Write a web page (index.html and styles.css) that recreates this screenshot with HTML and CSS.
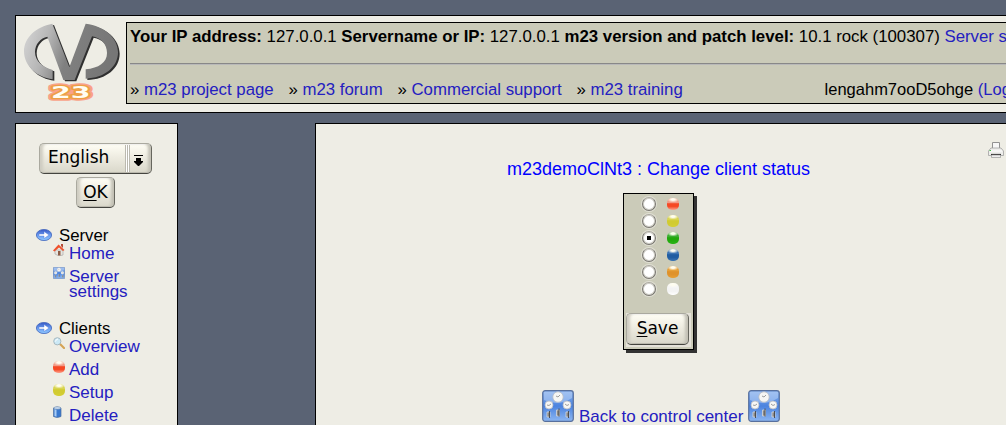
FILE: index.html
```html
<!DOCTYPE html>
<html lang="en">
<head>
<meta charset="utf-8">
<title>m23 - Change client status</title>
<link rel="stylesheet" href="styles.css">
</head>
<body>
<svg class="defs" width="0" height="0">
  <defs>
    <linearGradient id="steel" x1="0" y1="0" x2="1" y2=".2"><stop offset="0" stop-color="#d8d8d8"/><stop offset=".3" stop-color="#b5b5b5"/><stop offset=".55" stop-color="#808080"/><stop offset="1" stop-color="#767676"/></linearGradient>
    <linearGradient id="blue" x1="0" y1="0" x2="0" y2="1"><stop offset="0" stop-color="#8db4ec"/><stop offset=".5" stop-color="#4b83df"/><stop offset="1" stop-color="#8cb6f2"/></linearGradient>
    <linearGradient id="arrowbg" x1="0" y1="0" x2="0" y2="1"><stop offset="0" stop-color="#3556c4"/><stop offset=".5" stop-color="#6a9cf0"/><stop offset="1" stop-color="#8fc8ff"/></linearGradient>
    <symbol id="arrow" viewBox="0 0 16 12"><ellipse cx="8" cy="6" rx="7.6" ry="5.6" fill="url(#arrowbg)" stroke="#4065bd" stroke-width=".8"/><path d="M3 5h5V2.500L13 6 8 9.500V7H3z" fill="#fff" stroke="#4b72cf" stroke-width=".4"/></symbol>
    <symbol id="panel" viewBox="0 0 32 32"><rect x=".7" y=".7" width="30.600" height="30.600" rx="2.500" fill="url(#blue)" stroke="#58709d" stroke-width="1.200"/><path d="M2 10Q16 17 30 8V2H2z" fill="#b7d0f5" opacity=".55"/><g fill="#f6f6f4" stroke="#b9bdc4" stroke-width=".8"><circle cx="16" cy="7" r="5.2"/><circle cx="7" cy="15" r="4"/><circle cx="25" cy="15" r="4"/></g><path d="M14 6l2 1 2-2M5 15l2 .5 2-1.500M23 14l2 1.500 2-1" stroke="#888" stroke-width=".8" fill="none"/><g fill="#888" stroke="#d5d8dc" stroke-width=".8"><path d="M5 22h3v5H5zM14.500 20h3v6h-3zM24 22h3v5h-3z"/></g><path d="M7.500 21v7M17 18.500v8M26.500 21v7" stroke="#444" stroke-width=".9"/></symbol>
  </defs>
</svg>
<header class="top">
  <svg class="logo" viewBox="0 0 330 288" width="110" height="96">
    <path transform="translate(5 4)" fill="#303030" d="M109 23C60 32 24 65 24 106C24 150 62 184 110 190V162C80 154 57 136 57 108C57 84 74 66 94 62L142 192H176L228 61C254 65 273 84 273 111C273 140 248 156 209 160V188C266 186 306 153 306 109C306 66 266 30 209 23L160 154z"/>
    <path fill="url(#steel)" d="M109 23C60 32 24 65 24 106C24 150 62 184 110 190V162C80 154 57 136 57 108C57 84 74 66 94 62L142 192H176L228 61C254 65 273 84 273 111C273 140 248 156 209 160V188C266 186 306 153 306 109C306 66 266 30 209 23L160 154z"/>
    <g class="logo-number">
      <text class="halo" x="105" y="247" textLength="118" lengthAdjust="spacingAndGlyphs">23</text>
      <text class="edge" x="105" y="247" textLength="118" lengthAdjust="spacingAndGlyphs">23</text>
      <text x="105" y="247" textLength="118" lengthAdjust="spacingAndGlyphs">23</text>
    </g>
  </svg>
  <div class="info">
    <div class="facts"><b>Your IP address:</b> 127.0.0.1 <b>Servername or IP:</b> 127.0.0.1 <b>m23 version and patch level:</b> 10.1 rock (100307) <a>Server status</a></div>
    <hr>
    <div class="links">
      <span>» <a>m23 project page</a></span><span>» <a>m23 forum</a></span><span>» <a>Commercial support</a></span><span>» <a>m23 training</a></span>
      <span class="user">lengahm7ooD5ohge <a>(Logout)</a></span>
    </div>
  </div>
</header>
<div class="columns">
  <nav class="side">
    <div class="btn select"><span class="lang">English</span><i class="grip"></i><svg width="9" height="12" viewBox="0 0 9 12"><path d="M0 0h9v1H0zM2 3h5v3h2v1L5 11H4L0 7V6h2z"/></svg></div>
    <div class="btn ok"><u>O</u>K</div>
    <section class="menu first">
      <h2><svg width="16" height="12"><use href="#arrow"/></svg>Server</h2>
      <p><svg width="12" height="12" viewBox="0 0 12 12"><path d="M2 6h8v5L6 12 2 10z" fill="#e8e6e0" stroke="#aaa" stroke-width=".7"/><path d="M5 7h2.500v4.500H5z" fill="#8c5c45"/><path d="M0 6.500L5.500.5 11.500 6 10 7 6 3.500 1.500 7.500z" fill="#ef522d"/><path d="M8 0h2v4L8 2z" fill="#b44c37"/></svg><a>Home</a></p>
      <p><svg width="12" height="12"><use href="#panel"/></svg><a>Server settings</a></p>
    </section>
    <section class="menu">
      <h2><svg width="16" height="12"><use href="#arrow"/></svg>Clients</h2>
      <p><svg width="12" height="12" viewBox="0 0 12 12"><path d="M7 7l4 4" stroke="#d5a456" stroke-width="2.200" stroke-linecap="round"/><circle cx="4.300" cy="4.300" r="3.600" fill="#cbe9f6" stroke="#a8b9c0"/><path d="M2.500 4.500Q3 2 5 2" stroke="#fff" fill="none"/></svg><a>Overview</a></p>
      <p><i class="ball red"></i><a>Add</a></p>
      <p><i class="ball yellow"></i><a>Setup</a></p>
      <p><svg width="12" height="12" viewBox="0 0 12 12"><path d="M.5 2Q4 0 8 2v8.500Q4 12.500.5 10.500z" fill="#3979cf" stroke="#4c6f9f" stroke-width=".7"/><path d="M1.500 3l2 .7v7l-2-.7z" fill="#a9cdf5"/><ellipse cx="4.300" cy="2" rx="3.500" ry="1.300" fill="#c8dbf0" stroke="#6481a5" stroke-width=".5"/></svg><a>Delete</a></p>
    </section>
  </nav>
  <main class="page">
    <svg class="printer" width="16" height="17" viewBox="0 0 16 17"><path d="M4.500.5h7v7h-7z" fill="#f7f7f7" stroke="#929292"/><path d="M3 6h10l2.500 3v4.500H.5V9z" fill="#eeeeec" stroke="#a1a1a1" stroke-width=".8"/><path d="M2 9h12" stroke="#fff"/><path d="M3 12.500h10" stroke="#222" stroke-width="1.200"/><path d="M3.500 13h9v2.500h-9z" fill="#eee" stroke="#999" stroke-width=".7"/><path d="M1.500 8.500h1.500" stroke="#48c048"/></svg>
    <h1>m23demoClNt3 : Change client status</h1>
    <div class="status">
      <div class="row"><i class="radio"></i><i class="ball red"></i></div>
      <div class="row"><i class="radio"></i><i class="ball yellow"></i></div>
      <div class="row"><i class="radio on"></i><i class="ball green"></i></div>
      <div class="row"><i class="radio"></i><i class="ball navy"></i></div>
      <div class="row"><i class="radio"></i><i class="ball orange"></i></div>
      <div class="row"><i class="radio"></i><i class="ball white"></i></div>
      <div class="savewrap"><div class="btn save"><span><u>S</u>ave</span></div></div>
    </div>
    <div class="back"><svg width="32" height="32"><use href="#panel"/></svg><a>Back to control center</a><svg width="32" height="32"><use href="#panel"/></svg></div>
  </main>
</div>
</body>
</html>
```
FILE: styles.css
```css
* { box-sizing: border-box; }
html, body { height: 100%; }
body {
  margin: 0;
  padding: 15px 0 0 15px;
  overflow: hidden;
  background: #5a6374;
  color: #000;
  font: 16.8px/19px "Liberation Sans", Arial, sans-serif;
}
svg { display: block; flex: none; }
.defs { position: absolute; }
a { color: #2420c0; }
.top {
  display: flex;
  width: 1060px;
  height: 98px;
  border: 1px solid #000;
  background: #eeede5;
}
.info {
  width: 940px;
  height: 82px;
  margin-top: 6px;
  padding: 4px 3px 0;
  border: 1px solid #000;
  background: #cbcbb9;
  white-space: nowrap;
}
.facts { font-size: 16.81px; }
.info hr { height: 2px; margin: 17px 0 15px; border: 0; border-top: 1px solid #888; border-bottom: 1px solid #b9b9b9; }
.links { display: flex; gap: 14.8px; }
.user { margin-left: 127px; font-size: 16.5px; }
.logo-number text {
  font: bold 45px "DejaVu Sans", sans-serif;
  fill: #fffdf2;
}
.logo-number .halo { stroke: #ff7a58; stroke-width: 16; stroke-linejoin: round; opacity: .65; }
.logo-number .edge { stroke: #eda044; stroke-width: 8; stroke-linejoin: round; }
.columns { display: flex; gap: 137px; margin-top: 10px; }
.side {
  width: 163px;
  height: 302px;
  flex: none;
  padding: 19px 0 0 20px;
  border: 1px solid #000;
  border-bottom: 0;
  background: #eeede5;
}
.btn {
  display: flex;
  align-items: center;
  border: 1px solid #aaa99f;
  border-right-color: #66665e;
  border-bottom: 1px solid #44443f;
  border-radius: 5px;
  background: linear-gradient(#fffef5, #eeece1 45%, #d9d7ca);
  box-shadow: inset 4px 0 3px -1px #cfcdc2, inset -4px 0 3px -1px #c2c0b5, inset 0 -1px #b5b3a8, inset 0 1px #fff;
  font: 17px/22px "DejaVu Sans", sans-serif;
}
.btn u { text-underline-offset: 2px; text-decoration-thickness: 1px; }
.select { width: 113px; height: 31px; margin-left: 3px; padding: 0 8px 3px; justify-content: space-between; }
.select .lang { width: 74px; margin-top: -1px; }
.select svg { margin: 8px 0 0; }
.grip { width: 5px; height: 27px; margin: 3px 0 0 -2px; border: solid #bbb9af; border-width: 0 1px; background: linear-gradient(90deg, #fff 1px, #bbb9af 1px 2px, #fff 2px); }
.ok { width: 39px; height: 31px; margin: 3px 0 0 40px; padding-bottom: 2px; justify-content: center; }
.menu { margin-bottom: 18px; }
.menu.first { margin-top: 18px; margin-bottom: 20px; }
.menu h2 { display: flex; align-items: center; gap: 7px; height: 18px; margin: 0; font-size: 16.8px; font-weight: normal; }
.menu p { display: flex; gap: 4px; margin: 0 0 8px 17px; line-height: 15px; font-size: 17px; }
.menu p a { width: 80px; margin-top: 2px; }
.menu p + p { margin-top: -2px; }
.menu p > .ball { margin-top: 1px; height: 12px; }
.ball { display: block; flex: none; width: 12px; height: 12px; border-radius: 5px; background: radial-gradient(ellipse 6px 3px at 50% 1.5px, #fffdf0 0 30%, #fff0 100%), linear-gradient(var(--hi), var(--hi) 38%, var(--lo) 48%, var(--lo) 70%, var(--end)); }
.red { --hi: #f29a87; --lo: #f64824; --end: #fca48f; }
.yellow { --hi: #d8d451; --lo: #d1cb31; --end: #d5d035; }
.green { --hi: #3cae31; --lo: #22a90c; --end: #2ab517; }
.navy { --hi: #3c74b4; --lo: #205da2; --end: #3e76b3; }
.orange { --hi: #e6a039; --lo: #df922b; --end: #e8a035; }
.white { --hi: #f5f5f5; --lo: #f3f3f3; --end: #fff; }
.page {
  width: 800px;
  height: 302px;
  flex: none;
  border: 1px solid #000;
  border-bottom: 0;
  background: #eeede5;
}
.printer { margin: 18px 0 0 672px; }
.page h1 { width: 685px; height: 21px; margin: 0; font-size: 18px; line-height: 21px; font-weight: normal; text-align: center; color: #00f; }
.status { width: 71px; height: 157px; margin: 13px 0 0 307px; padding: 2px; border: 1px solid #000; background: #cbcbb9; box-shadow: 3px 3px #333; }
.row { display: flex; align-items: center; gap: 11px; height: 17px; padding: 0 0 2px 16px; }
.row .ball { margin-top: 1px; }
.radio { display: flex; flex: none; width: 14px; height: 14px; border: 1px solid #77756e; border-top-color: #aaa89f; border-radius: 50%; background: #fff; box-shadow: inset 0 0 0 1px #d0cfc7, 0 0 0 1px #e0dfd4; }
.radio.on::after { content: ""; width: 4px; height: 4px; margin: auto; background: #000; }
.savewrap { width: 65px; height: 34px; margin-top: 15px; background: #e5e2d9; }
.save { width: 63px; height: 32px; justify-content: center; padding-bottom: 2px; }
.back { display: flex; gap: 5px; height: 32px; margin: 40px 0 0 226px; font-size: 17px; }
.back a { margin-top: 17px; white-space: nowrap; }
```
